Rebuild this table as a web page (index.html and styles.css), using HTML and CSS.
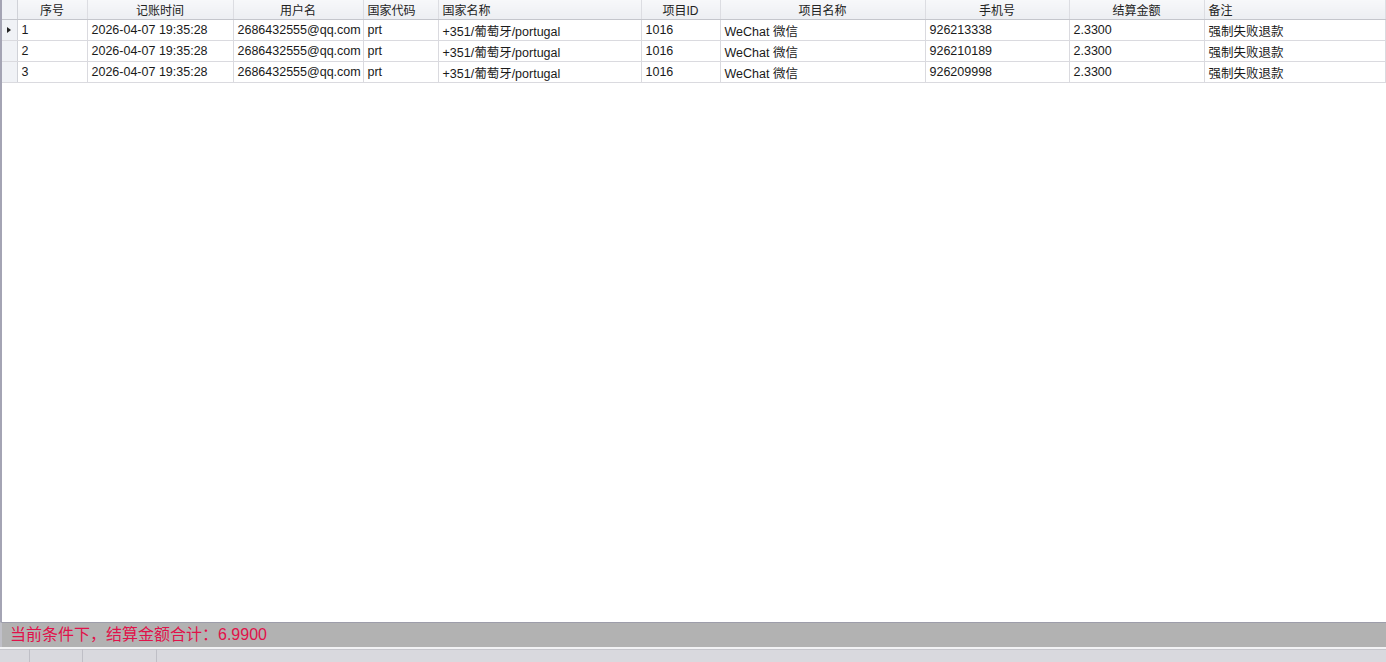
FILE: index.html
```html
<!DOCTYPE html>
<html lang="zh-CN">
<head>
  <meta charset="UTF-8">
  <title>结算记录</title>
  <link rel="stylesheet" href="styles.css">
</head>
<body>
  <div class="grid-panel">
    <table class="grid">
      <colgroup>
        <col class="c-ind">
        <col style="width:70px">
        <col style="width:146px">
        <col style="width:130px">
        <col style="width:75px">
        <col style="width:203px">
        <col style="width:79px">
        <col style="width:205px">
        <col style="width:144px">
        <col style="width:135px">
        <col>
      </colgroup>
      <thead>
        <tr>
          <th class="ind"></th>
          <th>序号</th>
          <th>记账时间</th>
          <th>用户名</th>
          <th class="left">国家代码</th>
          <th class="left">国家名称</th>
          <th>项目ID</th>
          <th>项目名称</th>
          <th>手机号</th>
          <th>结算金额</th>
          <th class="left">备注</th>
        </tr>
      </thead>
      <tbody>
        <tr class="current">
          <td class="ind"><span class="arrow"></span></td>
          <td>1</td>
          <td>2026-04-07 19:35:28</td>
          <td>2686432555@qq.com</td>
          <td>prt</td>
          <td>+351/葡萄牙/portugal</td>
          <td>1016</td>
          <td>WeChat 微信</td>
          <td>926213338</td>
          <td>2.3300</td>
          <td>强制失败退款</td>
        </tr>
        <tr>
          <td class="ind"></td>
          <td>2</td>
          <td>2026-04-07 19:35:28</td>
          <td>2686432555@qq.com</td>
          <td>prt</td>
          <td>+351/葡萄牙/portugal</td>
          <td>1016</td>
          <td>WeChat 微信</td>
          <td>926210189</td>
          <td>2.3300</td>
          <td>强制失败退款</td>
        </tr>
        <tr>
          <td class="ind"></td>
          <td>3</td>
          <td>2026-04-07 19:35:28</td>
          <td>2686432555@qq.com</td>
          <td>prt</td>
          <td>+351/葡萄牙/portugal</td>
          <td>1016</td>
          <td>WeChat 微信</td>
          <td>926209998</td>
          <td>2.3300</td>
          <td>强制失败退款</td>
        </tr>
      </tbody>
    </table>
  </div>

  <div class="summary">当前条件下，结算金额合计：6.9900</div>

  <div class="tabs">
    <span class="tab" style="width:29px"></span>
    <span class="tab" style="width:52px"></span>
    <span class="tab" style="width:73px"></span>
  </div>
</body>
</html>
```

FILE: styles.css
```css
html, body {
  margin: 0;
  height: 100%;
  overflow: hidden;
}
body {
  font-family: "Liberation Sans", "Noto Sans CJK SC", sans-serif;
  font-size: 12.5px;
  color: #1a1a1a;
  background: #fff;
  display: flex;
  flex-direction: column;
}
.grid-panel {
  height: 622px;
  border-left: 2px solid #a4a4b4;
  background: #fff;
  box-sizing: border-box;
}
.grid {
  width: 100%;
  table-layout: fixed;
  border-collapse: collapse;
}
.c-ind {
  width: 15px;
}
.grid th {
  height: 19px;
  padding: 0 4px;
  font-weight: normal;
  font-size: 12px;
  text-align: center;
  white-space: nowrap;
  overflow: hidden;
  background: linear-gradient(#f7f8fa, #eceef2);
  border-right: 1px solid #dcdde2;
  border-bottom: 1px solid #c4c6cc;
  color: #222;
}
.grid th.left {
  text-align: left;
}
.grid td {
  height: 20px;
  padding: 0 0 0 4px;
  white-space: nowrap;
  overflow: hidden;
  border-right: 1px solid #dadadf;
  border-bottom: 1px solid #dadadf;
}
.grid td.ind, .grid th.ind {
  padding: 0;
  background: #f0f2f6;
  border-right: 1px solid #d0d2d8;
}
.arrow {
  display: block;
  width: 0;
  height: 0;
  margin-left: 5px;
  border-top: 3px solid transparent;
  border-bottom: 3px solid transparent;
  border-left: 4px solid #222;
}
.summary {
  height: 24px;
  line-height: 24px;
  padding-left: 8px;
  background: #b2b2b2;
  border-top: 1px solid #9d9daa;
  border-left: 2px solid #c0c0c8;
  color: #e0124a;
  font-size: 16px;
}
.tabs {
  flex: 1;
  display: flex;
  background: #d9d9de;
  border-top: 2px solid #f2f2f4;
  box-shadow: inset 0 1px 0 #c6c6cc;
}
.tab {
  border-right: 1px solid #bfbfc6;
}
```
